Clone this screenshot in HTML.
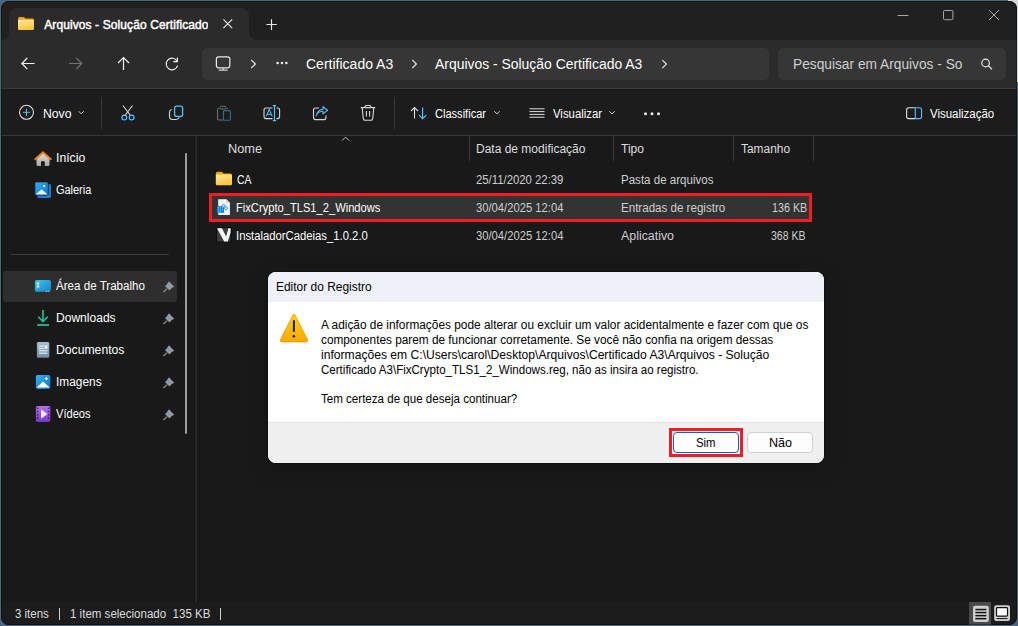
<!DOCTYPE html>
<html><head><meta charset="utf-8">
<style>
*{margin:0;padding:0;box-sizing:border-box}
html,body{width:1018px;height:626px;overflow:hidden}
body{background:#4b6780;font-family:"Liberation Sans",sans-serif;font-size:12px;color:#fff;position:relative}
.a{position:absolute;white-space:pre;transform-origin:0 0}
.r{position:absolute}
svg{position:absolute;overflow:visible}
</style></head><body>
<!-- desktop corner highlight top-right -->
<div class="r" style="left:1008px;top:0;width:10px;height:82px;background:#d4d7da"></div>
<div id="win" class="r" style="left:1px;top:1px;width:1016px;height:624px;border-radius:8px;background:#191919;overflow:hidden">
</div>
<!-- tab strip -->
<div class="r" style="left:1px;top:1px;width:1016px;height:39px;background:#202020;border-radius:8px 8px 0 0"></div>
<div class="r" style="left:9px;top:8px;width:240px;height:32px;background:#2b2b2b;border-radius:8px 8px 0 0"></div><div class="r" style="left:1px;top:32px;width:8px;height:8px;background:#2b2b2b"></div><div class="r" style="left:1px;top:32px;width:8px;height:8px;background:#202020;border-bottom-right-radius:7px"></div><div class="r" style="left:249px;top:32px;width:8px;height:8px;background:#2b2b2b"></div><div class="r" style="left:249px;top:32px;width:8px;height:8px;background:#202020;border-bottom-left-radius:7px"></div>
<!-- nav row -->
<div class="r" style="left:1px;top:40px;width:1016px;height:48px;background:#2b2b2b"></div>
<div class="r" style="left:1px;top:88px;width:1016px;height:1px;background:#3b3b3b"></div>
<div class="r" style="left:202px;top:48px;width:567px;height:32px;background:#363636;border-radius:5px"></div>
<div class="r" style="left:778px;top:48px;width:228px;height:32px;background:#363636;border-radius:5px"></div>
<!-- command bar -->
<div class="r" style="left:1px;top:89px;width:1016px;height:46px;background:#1c1c1c"></div>
<div class="r" style="left:1px;top:135px;width:1016px;height:1px;background:#363636"></div>
<div class="r" style="left:101px;top:97px;width:1px;height:32px;background:#3a3a3a"></div>
<div class="r" style="left:394px;top:97px;width:1px;height:32px;background:#3a3a3a"></div>
<!-- content -->
<div class="r" style="left:1px;top:136px;width:1016px;height:466px;background:#191919"></div>
<div class="r" style="left:1px;top:602px;width:1016px;height:23px;background:#1c1c1c;border-radius:0 0 8px 8px"></div>
<div class="r" style="left:194px;top:136px;width:1px;height:466px;background:#151515"></div><div class="r" style="left:195px;top:136px;width:2px;height:466px;background:#272727"></div>
<!-- nav pane -->
<div class="r" style="left:11px;top:254px;width:158px;height:1px;background:#3a3a3a"></div>
<div class="r" style="left:3px;top:271px;width:174px;height:31px;background:#2e2e2e;border-radius:3px"></div>
<div class="r" style="left:185px;top:153px;width:2px;height:281px;background:#9d9d9d;border-radius:1px"></div>
<!-- list header separators -->
<div class="r" style="left:469px;top:136px;width:1px;height:25px;background:#3a3a3a"></div>
<div class="r" style="left:613px;top:136px;width:1px;height:25px;background:#3a3a3a"></div>
<div class="r" style="left:733px;top:136px;width:1px;height:25px;background:#3a3a3a"></div>
<div class="r" style="left:813px;top:136px;width:1px;height:25px;background:#3a3a3a"></div>
<!-- selected row -->
<div class="r" style="left:209px;top:193px;width:603px;height:29px;background:#333333;border:3px solid #f21c26"></div>

<!-- dialog -->
<div class="r" style="left:268px;top:272px;width:556px;height:191px;background:#fff;border-radius:8px;overflow:hidden;box-shadow:0 0 0 1px rgba(0,0,0,0.25),0 6px 26px rgba(0,0,0,0.22)">
  <div class="r" style="left:0;top:0;width:556px;height:30px;background:#eef2f8"></div>
  <div class="r" style="left:0;top:150px;width:556px;height:41px;background:#f0f0f0;border-top:1px solid #e0e0e0"></div>
</div>
<div class="r" style="left:673px;top:432px;width:66px;height:21px;background:#fdfdfd;border:1px solid #0067c0;border-radius:4px"></div>
<div class="r" style="left:669px;top:428px;width:74px;height:29px;border:3px solid #f21c26"></div>
<div class="r" style="left:747px;top:432px;width:66px;height:21px;background:#fdfdfd;border:1px solid #d0d0d0;border-radius:4px"></div>

<!-- status bar -->
<div class="r" style="left:59px;top:608px;width:1px;height:12px;background:#cfcfcf"></div>
<div class="r" style="left:220px;top:608px;width:1px;height:12px;background:#cfcfcf"></div>
<div class="r" style="left:969px;top:602px;width:22px;height:23px;background:#4a4a4a"></div>

<div class="r" style="left:1px;top:1px;width:1016px;height:624px;border-radius:8px;border:1px solid rgba(0,0,0,0.35)"></div>
<svg style="left:0;top:0" width="1018" height="626" viewBox="0 0 1018 626">
<defs>
<linearGradient id="fold" x1="0" y1="0" x2="0.3" y2="1"><stop offset="0" stop-color="#ffe9a0"/><stop offset="1" stop-color="#fcc53c"/></linearGradient>
<linearGradient id="warn" x1="0" y1="0" x2="0" y2="1"><stop offset="0" stop-color="#ffd400"/><stop offset="1" stop-color="#f9a800"/></linearGradient>
<linearGradient id="home" x1="0" y1="0" x2="0" y2="1"><stop offset="0" stop-color="#dcdcdc"/><stop offset="1" stop-color="#a8a8a8"/></linearGradient>
<linearGradient id="blu" x1="0" y1="0" x2="1" y2="1"><stop offset="0" stop-color="#36b0f0"/><stop offset="1" stop-color="#0f74c9"/></linearGradient>
<linearGradient id="desk" x1="0" y1="0" x2="1" y2="1"><stop offset="0" stop-color="#3cc4ee"/><stop offset="1" stop-color="#1583c8"/></linearGradient>
<linearGradient id="doc" x1="0" y1="0" x2="0" y2="1"><stop offset="0" stop-color="#a9c0d6"/><stop offset="1" stop-color="#6f8aa6"/></linearGradient>
<linearGradient id="vid" x1="0" y1="0" x2="0" y2="1"><stop offset="0" stop-color="#b56ef2"/><stop offset="1" stop-color="#7a36c8"/></linearGradient>
<linearGradient id="dl" x1="0" y1="0" x2="0" y2="1"><stop offset="0" stop-color="#2ccf8e"/><stop offset="1" stop-color="#1fb5a8"/></linearGradient>
</defs>
<!-- tab folder -->
<path d="M18 18.8Q18 17 19.6 17H23.8L25.6 18.6H32.6Q34 18.6 34 20V21H18Z" fill="#f0a30a"/>
<rect x="18" y="19.8" width="16" height="10.2" rx="1.3" fill="url(#fold)"/>
<!-- tab close -->
<path d="M223.4 19.4L232.2 28.2M232.2 19.4L223.4 28.2" stroke="#e6e6e6" stroke-width="1.2" fill="none"/>
<!-- plus -->
<path d="M271.5 19.2V30M266.4 24.5H276.8" stroke="#e6e6e6" stroke-width="1.2" fill="none"/>
<!-- window controls -->
<path d="M897.6 15.5H908.4" stroke="#a8a8a8" stroke-width="1" fill="none"/>
<rect x="943.5" y="10.5" width="9.4" height="9.2" rx="1" stroke="#a8a8a8" stroke-width="1" fill="none"/>
<path d="M989 10L999 20M999 10L989 20" stroke="#a8a8a8" stroke-width="1" fill="none"/>
<!-- nav arrows -->
<path d="M21.8 63.5H34.6M27.2 58L21.8 63.5L27.2 69" stroke="#f2f2f2" stroke-width="1.2" fill="none"/>
<path d="M69 63.5H81.8M76.4 58L81.8 63.5L76.4 69" stroke="#727272" stroke-width="1.2" fill="none"/>
<path d="M123.5 57.5V70M118 63L123.5 57.5L129 63" stroke="#f2f2f2" stroke-width="1.2" fill="none"/>
<path d="M177 61A5.8 5.8 0 1 0 177.6 65.6" stroke="#f2f2f2" stroke-width="1.2" fill="none"/>
<path d="M177.4 57.4V61.6H173.2" stroke="#f2f2f2" stroke-width="1.2" fill="none"/>
<!-- monitor -->
<rect x="216.4" y="56.8" width="13.4" height="11" rx="2.2" stroke="#e8e8e8" stroke-width="1.2" fill="none"/>
<path d="M223.1 67.8V70M218.6 70.2H227.6" stroke="#d8d8d8" stroke-width="1.2" fill="none"/>
<!-- chevrons -->
<path d="M251.2 59.8L255.4 64L251.2 68.2" stroke="#e8e8e8" stroke-width="1.2" fill="none"/>
<path d="M412.2 59.8L416.4 64L412.2 68.2" stroke="#e8e8e8" stroke-width="1.2" fill="none"/>
<path d="M662.3 60.1L666.4 64.1L662.3 68.1" stroke="#e8e8e8" stroke-width="1.2" fill="none"/>
<circle cx="277.6" cy="63" r="1.25" fill="#eee"/><circle cx="282" cy="63" r="1.25" fill="#eee"/><circle cx="286.4" cy="63" r="1.25" fill="#eee"/>
<!-- search -->
<circle cx="985.6" cy="63" r="3.8" stroke="#e8e8e8" stroke-width="1.2" fill="none"/>
<path d="M988.4 65.8L992 69.4" stroke="#e8e8e8" stroke-width="1.3" fill="none"/>

<!-- command bar icons -->
<circle cx="26.5" cy="112.3" r="7" stroke="#e0e0e0" stroke-width="1.1" fill="none"/>
<path d="M26.5 108.6V116M22.8 112.3H30.2" stroke="#4cc2ff" stroke-width="1" fill="none"/>
<path d="M78.6 111.2L81.2 113.8L83.8 111.2" stroke="#cfcfcf" stroke-width="1" fill="none"/>
<!-- cut -->
<path d="M123 105.5L130.5 115.5M132.5 105.5L125 115.5" stroke="#d8d8d8" stroke-width="1.1" fill="none"/>
<circle cx="124.3" cy="117.6" r="2.4" stroke="#4cc2ff" stroke-width="1.2" fill="none"/>
<circle cx="131.6" cy="117.6" r="2.4" stroke="#4cc2ff" stroke-width="1.2" fill="none"/>
<!-- copy -->
<path d="M171.6 109.2Q169.5 110 169.5 112.5V116.2Q169.5 119.5 172.8 119.5H176Q178.5 119.5 179.2 117.4" stroke="#d8d8d8" stroke-width="1.1" fill="none"/>
<rect x="174.6" y="106.2" width="8" height="10.2" rx="2" stroke="#4cc2ff" stroke-width="1.3" fill="none"/>
<!-- paste disabled -->
<path d="M219.5 108.5H218.8Q217.5 108.5 217.5 110V118.5Q217.5 120 219 120H223" stroke="#6d6d6d" stroke-width="1.1" fill="none"/>
<path d="M220 107.5Q220 106.3 221.2 106.3H224.8Q226 106.3 226 107.5V108.5Q226 109 225 109H221Q220 109 220 108.5Z" stroke="#6d6d6d" stroke-width="1" fill="none"/>
<path d="M227 108.5H228" stroke="#6d6d6d" stroke-width="1" fill="none"/>
<rect x="223.4" y="110.6" width="7" height="9.6" rx="1.3" stroke="#2f6d8f" stroke-width="1.1" fill="none"/>
<!-- rename -->
<path d="M272.5 108H266Q264 108 264 110V116.6Q264 118.6 266 118.6H272.5" stroke="#d8d8d8" stroke-width="1.1" fill="none"/>
<path d="M276.5 108H277.6Q279.6 108 279.6 110V116.6Q279.6 118.6 277.6 118.6H276.5" stroke="#d8d8d8" stroke-width="1.1" fill="none"/>
<path d="M266.2 116.4L269.2 109.4L272.2 116.4M267.2 114.2H271.2" stroke="#4cc2ff" stroke-width="1.1" fill="none"/>
<path d="M274.5 105.5V120.8M272.8 105.6H276.2M272.8 120.7H276.2" stroke="#4cc2ff" stroke-width="1.2" fill="none"/>
<!-- share -->
<path d="M319 108H315.5Q313.5 108 313.5 110V117.6Q313.5 119.6 315.5 119.6H324Q326 119.6 326 117.6V115.5" stroke="#d8d8d8" stroke-width="1.1" fill="none"/>
<path d="M316.2 116Q317 111.6 323 111.3V113.9L327.6 110.3L323 106.7V109.3Q317.6 109.7 316.2 116Z" stroke="#4cc2ff" stroke-width="1.1" fill="none" stroke-linejoin="round"/>
<!-- delete -->
<path d="M360.8 107.6H375.2M365 107.4V106.6Q365 105.5 366.3 105.5H369.7Q371 105.5 371 106.6V107.4" stroke="#d8d8d8" stroke-width="1.1" fill="none"/>
<path d="M362.2 107.8L363.3 118.6Q363.5 120.3 365.2 120.3H370.8Q372.5 120.3 372.7 118.6L373.8 107.8" stroke="#d8d8d8" stroke-width="1.1" fill="none"/>
<path d="M366.4 111V116.6M369.6 111V116.6" stroke="#d8d8d8" stroke-width="1.1" fill="none"/>
<!-- sort -->
<path d="M414.5 107.5V118.6M411 111L414.5 107.5L418 111" stroke="#e0e0e0" stroke-width="1.1" fill="none"/>
<path d="M422.6 107.5V118.6M419 115.1L422.6 118.6L426.2 115.1" stroke="#4cc2ff" stroke-width="1.2" fill="none"/>
<path d="M494.2 111.2L496.9 114L499.6 111.2" stroke="#cfcfcf" stroke-width="1" fill="none"/>
<!-- visualizar lines -->
<path d="M529.5 108.8H544.5M529.5 111.6H544.5M529.5 114.4H544.5M529.5 117.2H544.5" stroke="#e0e0e0" stroke-width="1" fill="none"/>
<path d="M609.4 111.2L612.1 114L614.8 111.2" stroke="#cfcfcf" stroke-width="1" fill="none"/>
<circle cx="645.5" cy="113.8" r="1.5" fill="#f0f0f0"/><circle cx="652" cy="113.8" r="1.5" fill="#f0f0f0"/><circle cx="658.5" cy="113.8" r="1.5" fill="#f0f0f0"/>
<!-- preview pane -->
<path d="M915.3 107.8H908.8Q906.6 107.8 906.6 110V116.4Q906.6 118.6 908.8 118.6H915.3" stroke="#e0e0e0" stroke-width="1.1" fill="none"/>
<path d="M915.3 107.8H919.6Q921.6 107.8 921.6 110V116.4Q921.6 118.6 919.6 118.6H915.3Z" stroke="#4cc2ff" stroke-width="1.1" fill="none"/>

<!-- header sort caret -->
<path d="M342 140.6L345.5 137.1L349 140.6" stroke="#bdbdbd" stroke-width="1" fill="none"/>

<!-- nav pane icons -->
<!-- home -->
<path d="M36.5 158.5V164.5Q36.5 166 38 166H41V161.2H44.8V166H48Q49.5 166 49.5 164.5V158.5L43 152.6Z" fill="url(#home)"/>
<path d="M35.2 159.2L43 152.2L50.8 159.2" stroke="#f47a14" stroke-width="2" fill="none" stroke-linecap="round" stroke-linejoin="round"/>
<!-- gallery -->
<rect x="37.2" y="184" width="13.8" height="13.9" rx="1.6" fill="#1a7fd4"/>
<rect x="34.9" y="181.9" width="13.4" height="13.2" rx="1.6" fill="url(#blu)" stroke="#191919" stroke-width="0.8"/>
<path d="M35.5 194.5L41.6 189.2L47.7 194.5Z" fill="#e6f3fb"/>
<circle cx="44.1" cy="186" r="1.1" fill="#fff"/>
<!-- desktop -->
<rect x="34.9" y="280.1" width="16.1" height="11.6" rx="1.8" fill="url(#desk)"/>
<rect x="36.8" y="282.6" width="2.4" height="1.8" fill="#fff"/>
<rect x="36.8" y="285.6" width="2.4" height="1.8" fill="#fff"/>
<rect x="45.8" y="290.8" width="1" height="1" fill="#ddd"/><rect x="47.8" y="290.8" width="1" height="1" fill="#ddd"/>
<!-- downloads -->
<path d="M43 310V321.6M38.2 316.7L43 321.6L47.8 316.7" stroke="url(#dl)" stroke-width="1.6" fill="none"/>
<path d="M37.2 325H49" stroke="#2ccfa0" stroke-width="1.6" fill="none"/>
<!-- documents -->
<rect x="36.9" y="342" width="12.4" height="15.8" rx="1.5" fill="url(#doc)"/>
<path d="M39 346H43.6M39 348.4H43.6M39 350.8H47.4M39 353.2H47.4" stroke="#f4f7fa" stroke-width="1" fill="none"/>
<rect x="44.6" y="345.4" width="2.8" height="3.4" fill="#f4f7fa"/>
<!-- pictures -->
<rect x="35.9" y="375" width="14.4" height="13.9" rx="1.6" fill="url(#blu)"/>
<path d="M36.6 387.6L43.1 381.6L49.6 387.6Z" fill="#fff"/>
<path d="M46.4 377.2V380.2M44.9 378.7H47.9" stroke="#fff" stroke-width="1" fill="none"/>
<!-- videos -->
<rect x="35.9" y="406" width="14.4" height="15.9" rx="1.6" fill="url(#vid)"/>
<path d="M41 409.2V418.8L47.6 414Z" fill="#f2eafc"/>
<g fill="#3a1a66"><rect x="36.9" y="407.5" width="1.4" height="1.4"/><rect x="36.9" y="410.8" width="1.4" height="1.4"/><rect x="36.9" y="414.1" width="1.4" height="1.4"/><rect x="36.9" y="417.4" width="1.4" height="1.4"/>
<rect x="47.9" y="407.5" width="1.4" height="1.4"/><rect x="47.9" y="410.8" width="1.4" height="1.4"/><rect x="47.9" y="414.1" width="1.4" height="1.4"/><rect x="47.9" y="417.4" width="1.4" height="1.4"/></g>
<!-- pins -->
<g transform="translate(0 0)"><path d="M168.9 281.3L174.3 286.7L172.7 287.5L170.4 289.2L169.6 290.6L164.9 285.9L166.3 285.1L168 282.8Z" fill="#8f9ba3"/><path d="M167 288.6L163.4 292.2" stroke="#8f9ba3" stroke-width="1.2"/></g><g transform="translate(0 32)"><path d="M168.9 281.3L174.3 286.7L172.7 287.5L170.4 289.2L169.6 290.6L164.9 285.9L166.3 285.1L168 282.8Z" fill="#8f9ba3"/><path d="M167 288.6L163.4 292.2" stroke="#8f9ba3" stroke-width="1.2"/></g><g transform="translate(0 64)"><path d="M168.9 281.3L174.3 286.7L172.7 287.5L170.4 289.2L169.6 290.6L164.9 285.9L166.3 285.1L168 282.8Z" fill="#8f9ba3"/><path d="M167 288.6L163.4 292.2" stroke="#8f9ba3" stroke-width="1.2"/></g><g transform="translate(0 96)"><path d="M168.9 281.3L174.3 286.7L172.7 287.5L170.4 289.2L169.6 290.6L164.9 285.9L166.3 285.1L168 282.8Z" fill="#8f9ba3"/><path d="M167 288.6L163.4 292.2" stroke="#8f9ba3" stroke-width="1.2"/></g><g transform="translate(0 128)"><path d="M168.9 281.3L174.3 286.7L172.7 287.5L170.4 289.2L169.6 290.6L164.9 285.9L166.3 285.1L168 282.8Z" fill="#8f9ba3"/><path d="M167 288.6L163.4 292.2" stroke="#8f9ba3" stroke-width="1.2"/></g>

<!-- list icons -->
<path d="M215.8 173.6Q215.8 171.8 217.6 171.8H221.8L223.6 173.4H230.4Q232 173.4 232 175V176H215.8Z" fill="#f0a30a"/>
<rect x="215.8" y="174.6" width="16.2" height="10.6" rx="1.3" fill="url(#fold)"/>
<!-- reg file -->
<path d="M218.2 199.2H226.4L229.9 202.7V214.9H218.2Z" fill="#f7f8fa"/>
<path d="M226.4 199.2V202.7H229.9Z" fill="#c9ced4"/>
<rect x="216.9" y="206.2" width="7.2" height="6.6" fill="#0a7fd6"/>
<g fill="#9ed6ff"><rect x="218" y="207.3" width="1" height="1"/><rect x="220" y="207.3" width="1" height="1"/><rect x="222" y="207.3" width="1" height="1"/><rect x="218" y="209.3" width="1" height="1"/><rect x="220" y="209.3" width="1" height="1"/><rect x="222" y="209.3" width="1" height="1"/><rect x="218" y="211.3" width="1" height="1"/><rect x="220" y="211.3" width="1" height="1"/></g>
<path d="M223.7 204L225.5 205.8L223.7 207.6L221.9 205.8Z M226.1 206.4L227.9 208.2L226.1 210L224.3 208.2Z" fill="#cfe8fa" stroke="#1b8fe0" stroke-width="0.9"/>
<!-- instalador -->
<rect x="216" y="227.2" width="15.6" height="15.4" fill="#0a0a0a"/>
<rect x="217" y="228.2" width="13.6" height="13.4" fill="#3c3c3c"/>
<path d="M217 228.2H222L226.1 236.6L228.4 228.2H230.6V232.4L227.8 241.6H224.2Z" fill="#f4f4f4"/>
<!-- warning -->
<path d="M292.9 315Q294 313.3 295.1 315L307.5 339.4Q308.5 341.9 305.8 341.9H282.2Q279.5 341.9 280.5 339.4Z" fill="url(#warn)" stroke="#e39400" stroke-width="0.7"/>
<path d="M293.9 320.2V331.8" stroke="#1b1b2b" stroke-width="2" fill="none"/>
<circle cx="293.9" cy="336.3" r="1.3" fill="#1b1b2b"/>
<!-- view toggles -->
<rect x="973" y="605.8" width="15.8" height="16.2" rx="2" fill="#cfcfcf"/>
<g fill="#111"><rect x="975.4" y="608.8" width="11" height="1.5"/><rect x="975.4" y="611.8" width="11" height="1.5"/><rect x="975.4" y="614.9" width="11" height="1.5"/><rect x="975.4" y="617.9" width="11" height="1.5"/></g>
<rect x="994.2" y="605.2" width="15.8" height="15.8" rx="2" fill="#cfcfcf"/>
<rect x="996.5" y="607.6" width="11" height="8.5" rx="0.8" fill="#fff" stroke="#111" stroke-width="1.2"/>
<path d="M996.5 618.6H1007.5" stroke="#111" stroke-width="1"/>
</svg>

<div class="a" style="left:44.20px;top:16.24px;font-size:12px;line-height:18px;color:#fff;width:164px;overflow:hidden;letter-spacing:0.1px;-webkit-text-stroke:0.45px #fff;">Arquivos - Solução Certificado</div>
<div class="a" style="left:306.00px;top:54.45px;font-size:14px;line-height:21px;color:#fff;transform:scaleX(1.0009);">Certificado A3</div>
<div class="a" style="left:435.00px;top:54.45px;font-size:14px;line-height:21px;color:#fff;transform:scaleX(0.9937);">Arquivos - Solução Certificado A3</div>
<div class="a" style="left:793.40px;top:53.65px;font-size:14px;line-height:21px;color:#cfcfcf;transform:scaleX(0.9811);">Pesquisar em Arquivos - So</div>
<div class="a" style="left:43.10px;top:104.84px;font-size:12px;line-height:18px;color:#fff;transform:scaleX(1.0180);">Novo</div>
<div class="a" style="left:435.00px;top:104.84px;font-size:12px;line-height:18px;color:#fff;transform:scaleX(0.9216);">Classificar</div>
<div class="a" style="left:553.00px;top:104.84px;font-size:12px;line-height:18px;color:#fff;transform:scaleX(0.9460);">Visualizar</div>
<div class="a" style="left:929.60px;top:104.84px;font-size:12px;line-height:18px;color:#fff;transform:scaleX(0.9560);">Visualização</div>
<div class="a" style="left:56.20px;top:149.14px;font-size:12px;line-height:18px;color:#fff;transform:scaleX(1.0185);">Início</div>
<div class="a" style="left:56.40px;top:181.14px;font-size:12px;line-height:18px;color:#fff;transform:scaleX(0.9101);">Galeria</div>
<div class="a" style="left:56.40px;top:277.14px;font-size:12px;line-height:18px;color:#fff;transform:scaleX(0.9667);">Área de Trabalho</div>
<div class="a" style="left:56.20px;top:309.14px;font-size:12px;line-height:18px;color:#fff;transform:scaleX(1.0041);">Downloads</div>
<div class="a" style="left:56.20px;top:341.14px;font-size:12px;line-height:18px;color:#fff;transform:scaleX(1.0155);">Documentos</div>
<div class="a" style="left:56.20px;top:373.14px;font-size:12px;line-height:18px;color:#fff;transform:scaleX(0.9911);">Imagens</div>
<div class="a" style="left:56.40px;top:405.14px;font-size:12px;line-height:18px;color:#fff;transform:scaleX(0.9262);">Vídeos</div>
<div class="a" style="left:228.20px;top:139.84px;font-size:12px;line-height:18px;color:#dedede;transform:scaleX(1.0632);">Nome</div>
<div class="a" style="left:476.20px;top:139.84px;font-size:12px;line-height:18px;color:#dedede;transform:scaleX(1.0001);">Data de modificação</div>
<div class="a" style="left:620.60px;top:139.84px;font-size:12px;line-height:18px;color:#dedede;transform:scaleX(1.0044);">Tipo</div>
<div class="a" style="left:740.50px;top:139.84px;font-size:12px;line-height:18px;color:#dedede;transform:scaleX(0.9926);">Tamanho</div>
<div class="a" style="left:236.80px;top:170.84px;font-size:12px;line-height:18px;color:#fff;transform:scaleX(0.8662);">CA</div>
<div class="a" style="left:476.40px;top:170.84px;font-size:12px;line-height:18px;color:#cfcfcf;transform:scaleX(0.9446);">25/11/2020 22:39</div>
<div class="a" style="left:620.60px;top:170.84px;font-size:12px;line-height:18px;color:#cfcfcf;transform:scaleX(0.9620);">Pasta de arquivos</div>
<div class="a" style="left:236.40px;top:198.84px;font-size:12px;line-height:18px;color:#fff;transform:scaleX(0.9292);">FixCrypto_TLS1_2_Windows</div>
<div class="a" style="left:476.40px;top:198.84px;font-size:12px;line-height:18px;color:#cfcfcf;transform:scaleX(0.9356);">30/04/2025 12:04</div>
<div class="a" style="left:620.60px;top:198.84px;font-size:12px;line-height:18px;color:#cfcfcf;transform:scaleX(0.9644);">Entradas de registro</div>
<div class="a" style="left:771.60px;top:198.84px;font-size:12px;line-height:18px;color:#cfcfcf;transform:scaleX(0.8952);">136 KB</div>
<div class="a" style="left:236.40px;top:226.84px;font-size:12px;line-height:18px;color:#fff;transform:scaleX(0.9408);">InstaladorCadeias_1.0.2.0</div>
<div class="a" style="left:476.40px;top:226.84px;font-size:12px;line-height:18px;color:#cfcfcf;transform:scaleX(0.9356);">30/04/2025 12:04</div>
<div class="a" style="left:620.60px;top:226.84px;font-size:12px;line-height:18px;color:#cfcfcf;transform:scaleX(1.0320);">Aplicativo</div>
<div class="a" style="left:771.00px;top:226.84px;font-size:12px;line-height:18px;color:#cfcfcf;transform:scaleX(0.8740);">368 KB</div>
<div class="a" style="left:276.40px;top:278.14px;font-size:12px;line-height:18px;color:#000;transform:scaleX(0.9955);">Editor do Registro</div>
<div class="a" style="left:320.80px;top:316.14px;font-size:12px;line-height:18px;color:#000;transform:scaleX(0.9887);">A adição de informações pode alterar ou excluir um valor acidentalmente e fazer com que os</div>
<div class="a" style="left:320.80px;top:331.14px;font-size:12px;line-height:18px;color:#000;transform:scaleX(0.9839);">componentes parem de funcionar corretamente. Se você não confia na origem dessas</div>
<div class="a" style="left:320.80px;top:346.14px;font-size:12px;line-height:18px;color:#000;transform:scaleX(1.0093);">informações em C:\Users\carol\Desktop\Arquivos\Certificado A3\Arquivos - Solução</div>
<div class="a" style="left:320.80px;top:361.14px;font-size:12px;line-height:18px;color:#000;transform:scaleX(0.9627);">Certificado A3\FixCrypto_TLS1_2_Windows.reg, não as insira ao registro.</div>
<div class="a" style="left:320.80px;top:390.44px;font-size:12px;line-height:18px;color:#000;transform:scaleX(0.9643);">Tem certeza de que deseja continuar?</div>
<div class="a" style="left:696.00px;top:433.84px;font-size:12px;line-height:18px;color:#000;transform:scaleX(0.9485);">Sim</div>
<div class="a" style="left:769.00px;top:433.84px;font-size:12px;line-height:18px;color:#000;transform:scaleX(1.0470);">Não</div>
<div class="a" style="left:14.70px;top:605.04px;font-size:12px;line-height:18px;color:#dcdcdc;transform:scaleX(0.9560);">3 itens</div>
<div class="a" style="left:70.20px;top:605.04px;font-size:12px;line-height:18px;color:#dcdcdc;transform:scaleX(0.9611);">1 item selecionado  135 KB</div>
</body></html>
